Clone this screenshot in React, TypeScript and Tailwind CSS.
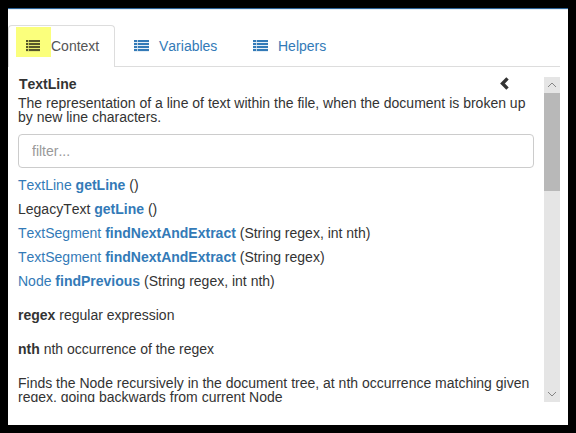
import React from "react";

function ListIcon({ className, width = 15 }: { className: string; width?: number }) {
  const dot = width === 15 ? 3 : 2;
  return (
    <svg width={width} height="12" fill="currentColor" shapeRendering="crispEdges" className={className}>
      {[0, 3, 6, 9].map((y) => (
        <g key={y}>
          <rect x="0" y={y} width={dot} height="2" />
          <rect x={dot} y={y} width="1" height="2" opacity="0.35" />
          <rect x={dot + 1} y={y} width={width - dot - 1} height="2" />
          <rect x="0" y={y + 2} width={width} height="1" opacity="0.12" />
        </g>
      ))}
    </svg>
  );
}

function Method({ type, name, args, plain }: { type: string; name: string; args: string; plain?: boolean }) {
  return (
    <div className="mb-[10px] h-[14px] whitespace-nowrap">
      <span className={plain ? "" : "text-[#337ab7]"}>{type}</span>{" "}
      <b className="text-[#337ab7]">{name}</b> {args}
    </div>
  );
}

export default function App() {
  return (
    <div className="h-[433px] w-[576px] overflow-hidden bg-black p-2 font-['Liberation_Sans',Arial,sans-serif] text-[14px] leading-[14px] text-[#333] [font-kerning:none]">
      <div className="flex h-[417px] flex-col border-t border-[#2b6195] bg-white">
        <div className="h-4 shrink-0 border-t border-[#e4edf6]" />
        <nav className="mr-2 flex h-[42px] shrink-0 text-[#337ab7]">
          <div className="flex w-[107px] rounded-t-[4px] border border-b-0 border-[#ddd] pl-[7px] text-[#555]">
            <div className="mt-px flex h-[30px] w-[35px] bg-[#fbff7c] pt-[13px] pl-[10px]">
              <ListIcon className="text-[#55562a]" width={14} />
            </div>
            <span className="mt-[13px]">Context</span>
          </div>
          <div className="flex flex-1 border-b border-[#ddd]">
            <div className="flex w-[119px] pl-[19px]">
              <ListIcon className="mt-[15px]" />
              <span className="mt-[14px] ml-[10px]">Variables</span>
            </div>
            <div className="flex pl-[19px]">
              <ListIcon className="mt-[15px]" />
              <span className="mt-[14px] ml-[10px]">Helpers</span>
            </div>
          </div>
        </nav>
        <main className="mt-[10px] mr-2 flex h-[325px] overflow-hidden">
          <div className="h-full w-[536px] overflow-hidden pl-[10px]">
            <div className="mb-[5px] flex h-[14px] justify-between pr-[34px] pl-px">
              <b>TextLine</b>
              <svg width="10" height="13" viewBox="0 0 10 13" fill="none" stroke="currentColor" strokeWidth="3.4" className="text-[#333]">
                <path d="M7.5 1.4 2.5 6.5 7.5 11.6" />
              </svg>
            </div>
            <p className="whitespace-nowrap">
              The representation of a line of text within the file, when the document is broken up
              <br />
              by new line characters.
            </p>
            <input
              placeholder="filter..."
              className="mt-[10px] mb-[10px] block h-[34px] w-[516px] rounded-[4px] border border-[#ccc] px-[13px] text-[14px] placeholder:text-[#999]"
            />
            <Method type="TextLine" name="getLine" args="()" />
            <Method type="LegacyText" name="getLine" args="()" plain />
            <Method type="TextSegment" name="findNextAndExtract" args="(String regex, int nth)" />
            <Method type="TextSegment" name="findNextAndExtract" args="(String regex)" />
            <Method type="Node" name="findPrevious" args="(String regex, int nth)" />
            <p className="mt-5"><b>regex</b> regular expression</p>
            <p className="mt-5"><b>nth</b> nth occurrence of the regex</p>
            <p className="mt-5 whitespace-nowrap">
              Finds the Node recursively in the document tree, at nth occurrence matching given
              <br />
              regex, going backwards from current Node
            </p>
          </div>
          <div className="flex h-full w-4 flex-col bg-[#e5e5e5] text-[#858585]">
            <svg width="16" height="16" fill="none" stroke="currentColor" className="shrink-0">
              <path d="M4 10 8 6l4 4" />
            </svg>
            <div className="h-[98px] bg-[#b8b8b8]" />
            <svg width="16" height="16" fill="none" stroke="currentColor" className="mt-auto shrink-0">
              <path d="M4 6l4 4 4-4" />
            </svg>
          </div>
        </main>
      </div>
    </div>
  );
}
